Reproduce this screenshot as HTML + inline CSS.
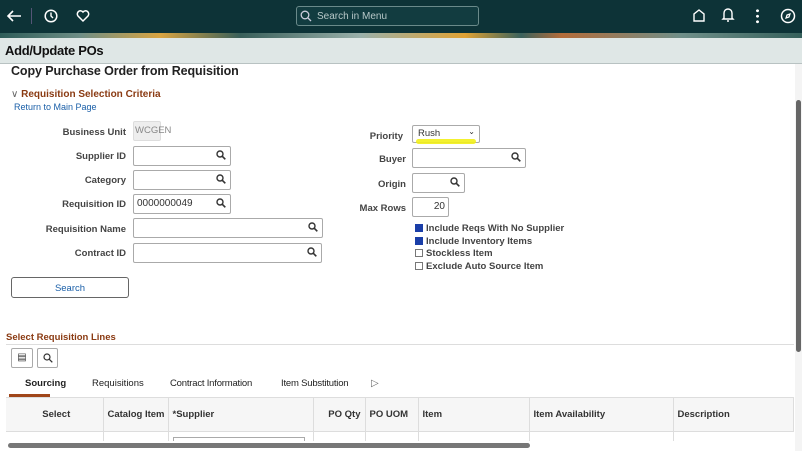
<!DOCTYPE html><html><head><style>
*{margin:0;padding:0;box-sizing:border-box}
body{width:802px;height:451px;overflow:hidden;background:#fff;font-family:"Liberation Sans",Arial,sans-serif;position:relative;color:#333}
.a{position:absolute}
.lbl{position:absolute;font-size:9.5px;font-weight:bold;color:#444;text-align:right;width:120px}
.inp{position:absolute;border:1px solid #aaa;border-radius:2px;background:#fff;height:20px;font-size:10px;padding:3px}
.mg{position:absolute;right:4px;top:3px}
.cb{position:absolute;font-size:9.5px;font-weight:bold;color:#444}
.cb i{display:inline-block;width:8px;height:8px;border:1px solid #777;vertical-align:-1px;margin-right:3px}
.cb i.on{background:#1a3ea8;border-color:#1a3ea8}
th{font-size:9.5px;font-weight:bold;color:#333;border-right:1px solid #ddd;text-align:left;padding-left:4px}
</style></head><body>
<div class="a" style="left:0;top:0;width:802px;height:33px;background:#0d3337"></div>
<div class="a" style="left:0;top:33px;width:802px;height:5px;background:linear-gradient(90deg,#2d5c58,#6e8e86 10%,#d9a441 20%,#385f5a 30%,#9ab0aa 45%,#e0a234 58%,#3a625d 65%,#b36c3a 70%,#6f8f89 85%,#35605b)"></div>
<svg class="a" style="left:6px;top:9px" width="16" height="14"><path d="M15 7H2M7 2L2 7l5 5" stroke="#fff" stroke-width="1.6" fill="none"/></svg>
<div class="a" style="left:31px;top:8px;width:1px;height:16px;background:#557"></div>
<svg class="a" style="left:44px;top:9px" width="14" height="14"><circle cx="7" cy="7" r="5.8" stroke="#fff" stroke-width="1.5" fill="none"/><path d="M7 3.5V7l2 2" stroke="#fff" stroke-width="1.4" fill="none"/></svg>
<svg class="a" style="left:76px;top:9px" width="14" height="14"><path d="M7 12L2 7A2.8 2.8 0 0 1 7 3A2.8 2.8 0 0 1 12 7Z" stroke="#fff" stroke-width="1.5" fill="none"/></svg>
<div class="a" style="left:296px;top:6px;width:183px;height:20px;border:1px solid #6a8a8a;border-radius:3px;background:#123c40;color:#b8c8c8;font-size:10px;padding:4px 0 0 20px">Search in Menu</div>
<svg class="a" style="left:300px;top:10px" width="12" height="12"><circle cx="5" cy="5" r="3.8" stroke="#ccd" stroke-width="1.3" fill="none"/><path d="M8 8l3 3" stroke="#ccd" stroke-width="1.3"/></svg>
<svg class="a" style="left:692px;top:8px" width="14" height="14"><path d="M2 13V6l5-4 5 4v7z" stroke="#fff" stroke-width="1.4" fill="none"/></svg>
<svg class="a" style="left:721px;top:7px" width="14" height="16"><path d="M3 11V6a4 4 0 0 1 8 0v5l1 1H2zM6 14h2" stroke="#fff" stroke-width="1.4" fill="none"/></svg>
<div class="a" style="left:756px;top:8px;width:3px;height:16px;background:radial-gradient(circle,#fff 1.3px,transparent 1.6px) 0 0/3px 5.5px"></div>
<svg class="a" style="left:780px;top:8px" width="16" height="16"><circle cx="8" cy="8" r="6.5" stroke="#fff" stroke-width="1.5" fill="none"/><path d="M10 6l-3 1-1 3 3-1z" stroke="#fff" stroke-width="1.2" fill="none"/></svg>
<div class="a" style="left:0;top:38px;width:802px;height:26px;background:#dfe7e6;border-bottom:1px solid #b8c2c2"></div>
<div class="a" style="left:5px;top:43px;font-size:13px;font-weight:bold;color:#111;letter-spacing:-0.3px">Add/Update POs</div>
<div class="a" style="left:11px;top:64px;font-size:12.5px;font-weight:bold;color:#222;letter-spacing:-0.1px">Copy Purchase Order from Requisition</div>
<div class="a" style="left:11px;top:89px;font-size:10px;font-weight:bold;color:#8a3a12"><span style="color:#666;font-weight:normal">&#8744;</span> Requisition Selection Criteria</div>
<div class="a" style="left:14px;top:102px;font-size:9px;color:#1a5fa8">Return to Main Page</div>
<div class="lbl" style="left:6px;top:127px">Business Unit</div>
<div class="inp" style="left:133px;top:121px;width:28px;background:#eee;border-color:#ddd;color:#888;font-size:9.5px;padding:3px 1px">WCGEN</div>
<div class="lbl" style="left:6px;top:151px">Supplier ID</div>
<div class="inp" style="left:133px;top:146px;width:98px"><svg class="mg" width="10" height="10"><circle cx="4" cy="4" r="3" stroke="#333" stroke-width="1.4" fill="none"/><path d="M6.3 6.3l3 3" stroke="#333" stroke-width="1.6"/></svg></div>
<div class="lbl" style="left:6px;top:175px">Category</div>
<div class="inp" style="left:133px;top:170px;width:98px"><svg class="mg" width="10" height="10"><circle cx="4" cy="4" r="3" stroke="#333" stroke-width="1.4" fill="none"/><path d="M6.3 6.3l3 3" stroke="#333" stroke-width="1.6"/></svg></div>
<div class="lbl" style="left:6px;top:199px">Requisition ID</div>
<div class="inp" style="left:133px;top:194px;width:98px">0000000049<svg class="mg" width="10" height="10"><circle cx="4" cy="4" r="3" stroke="#333" stroke-width="1.4" fill="none"/><path d="M6.3 6.3l3 3" stroke="#333" stroke-width="1.6"/></svg></div>
<div class="lbl" style="left:6px;top:224px">Requisition Name</div>
<div class="inp" style="left:133px;top:218px;width:190px"><svg class="mg" width="10" height="10"><circle cx="4" cy="4" r="3" stroke="#333" stroke-width="1.4" fill="none"/><path d="M6.3 6.3l3 3" stroke="#333" stroke-width="1.6"/></svg></div>
<div class="lbl" style="left:6px;top:248px">Contract ID</div>
<div class="inp" style="left:133px;top:243px;width:189px"><svg class="mg" width="10" height="10"><circle cx="4" cy="4" r="3" stroke="#333" stroke-width="1.4" fill="none"/><path d="M6.3 6.3l3 3" stroke="#333" stroke-width="1.6"/></svg></div>
<div class="a" style="left:11px;top:277px;width:118px;height:21px;border:1px solid #666;border-radius:3px;text-align:center;font-size:9.5px;color:#1a5fa8;padding-top:5px">Search</div>
<div class="lbl" style="left:283px;top:131px">Priority</div>
<div class="inp" style="left:412px;top:125px;width:68px;height:18px;padding:2px 5px;font-size:9.5px">Rush<span style="position:absolute;right:4px;top:1px;font-size:8px">&#8964;</span></div>
<div class="a" style="left:416px;top:139px;width:60px;height:5px;background:#f2ef1a;border-radius:3px;opacity:.9"></div>
<div class="lbl" style="left:286px;top:154px">Buyer</div>
<div class="inp" style="left:412px;top:148px;width:114px"><svg class="mg" width="10" height="10"><circle cx="4" cy="4" r="3" stroke="#333" stroke-width="1.4" fill="none"/><path d="M6.3 6.3l3 3" stroke="#333" stroke-width="1.6"/></svg></div>
<div class="lbl" style="left:286px;top:179px">Origin</div>
<div class="inp" style="left:412px;top:173px;width:53px"><svg class="mg" width="10" height="10"><circle cx="4" cy="4" r="3" stroke="#333" stroke-width="1.4" fill="none"/><path d="M6.3 6.3l3 3" stroke="#333" stroke-width="1.6"/></svg></div>
<div class="lbl" style="left:286px;top:203px">Max Rows</div>
<div class="inp" style="left:412px;top:197px;width:37px;text-align:right">20</div>
<div class="cb" style="left:415px;top:223px"><i class="on"></i>Include Reqs With No Supplier</div>
<div class="cb" style="left:415px;top:236px"><i class="on"></i>Include Inventory Items</div>
<div class="cb" style="left:415px;top:248px"><i></i>Stockless Item</div>
<div class="cb" style="left:415px;top:261px"><i></i>Exclude Auto Source Item</div>
<div class="a" style="left:6px;top:332px;font-size:9.5px;font-weight:bold;color:#8a3a12">Select Requisition Lines</div>
<div class="a" style="left:6px;top:344px;width:788px;height:1px;background:#ddd"></div>
<div class="a" style="left:11px;top:348px;width:22px;height:20px;border:1px solid #aaa;border-radius:2px;font-size:10px;text-align:center;padding-top:3px">&#9636;</div>
<div class="a" style="left:37px;top:348px;width:21px;height:20px;border:1px solid #aaa;border-radius:2px"><svg style="margin:4px 0 0 5px" width="10" height="10"><circle cx="4" cy="4" r="3" stroke="#333" stroke-width="1.2" fill="none"/><path d="M6.3 6.3l3 3" stroke="#333" stroke-width="1.3"/></svg></div>
<div class="a" style="left:25px;top:378px;font-size:9.5px;font-weight:bold;color:#222">Sourcing</div>
<div class="a" style="left:9px;top:394px;width:41px;height:3px;background:#a0461a"></div>
<div class="a" style="left:92px;top:378px;font-size:9.5px;color:#222">Requisitions</div>
<div class="a" style="left:170px;top:378px;font-size:9.5px;color:#222;letter-spacing:-0.2px">Contract Information</div>
<div class="a" style="left:281px;top:378px;font-size:9.5px;color:#222;letter-spacing:-0.2px">Item Substitution</div>
<div class="a" style="left:371px;top:378px;font-size:10px;color:#666">&#9655;</div>
<table class="a" style="left:6px;top:397px;width:788px;border-collapse:collapse;table-layout:fixed">
<tr style="height:34px;background:#f6f6f6;border-top:1px solid #ddd;border-bottom:1px solid #ddd">
<th style="width:97px;text-align:center">Select</th><th style="width:65px">Catalog Item</th><th style="width:145px">*Supplier</th><th style="width:52px;text-align:right;padding-right:4px">PO Qty</th><th style="width:53px">PO UOM</th><th style="width:111px">Item</th><th style="width:144px">Item Availability</th><th>Description</th></tr>
<tr style="height:12px"><td style="border-right:1px solid #ddd"></td><td style="border-right:1px solid #ddd"></td><td style="border-right:1px solid #ddd"><div style="margin:5px 0 0 4px;width:132px;height:8px;border:1px solid #aaa;border-bottom:none"></div></td><td style="border-right:1px solid #ddd"></td><td style="border-right:1px solid #ddd"></td><td style="border-right:1px solid #ddd"></td><td style="border-right:1px solid #ddd"></td><td></td></tr>
</table>
<div class="a" style="left:0;top:441px;width:795px;height:10px;background:#fff"></div>
<div class="a" style="left:8px;top:443px;width:522px;height:5px;background:#777;border-radius:3px"></div>
<div class="a" style="left:795px;top:64px;width:7px;height:387px;background:#f4f4f4"></div>
<div class="a" style="left:796px;top:100px;width:5px;height:252px;background:#666;border-radius:3px"></div>
</body></html>
